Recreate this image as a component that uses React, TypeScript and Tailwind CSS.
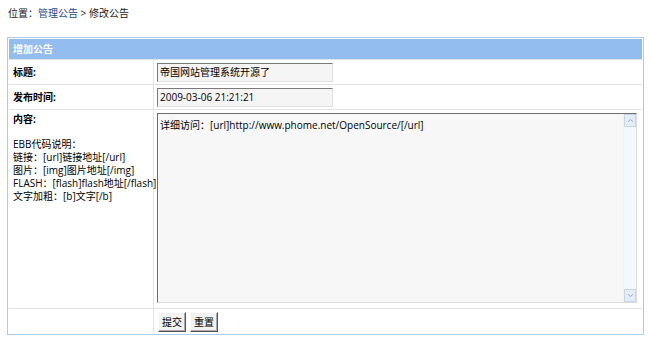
import { ChevronUp, ChevronDown } from "lucide-react";

const font = { fontFamily: '"Open Sans", "Noto Sans CJK SC", sans-serif' };

function Field({ value }: { value: string }) {
  return (
    <div className="w-[176px] h-[19px] bg-[#f5f5f5] border border-t-[#7a7a7a] border-l-[#7a7a7a] border-r-[#e0e0e0] border-b-[#e0e0e0] px-[2px] leading-[17px] text-black whitespace-nowrap">
      {value}
    </div>
  );
}

function Btn({ label }: { label: string }) {
  return (
    <button className="h-[20px] px-[3px] bg-[#f2f2f2] border border-t-[#fff] border-l-[#fff] border-r-[#555] border-b-[#555] shadow-[inset_-1px_-1px_0_#aaa] text-[10px] leading-[16px] text-black">
      {label}
    </button>
  );
}

export default function App() {
  return (
    <div className="w-[650px] h-[350px] bg-white text-[10px] text-[#222]" style={font}>
      <div className="pl-[8px] pt-[6px] h-[37px] leading-[14px]">
        位置：<a className="text-[#1a4a8a]">管理公告</a> &gt; 修改公告
      </div>

      <div className="ml-[7px] w-[637px] border border-[#aecbef] p-[1px] bg-white">
        <div className="h-[20px] bg-[#93bdee] pl-[4px] leading-[20px] text-white font-bold">增加公告</div>

        <div className="flex h-[25px] border-t border-[#e3e3e3]">
          <div className="w-[145px] border-r border-[#e3e3e3] pl-[4px] leading-[24px] font-bold text-black">标题:</div>
          <div className="flex-1 pl-[3px] pt-[3px]">
            <Field value="帝国网站管理系统开源了" />
          </div>
        </div>

        <div className="flex h-[25px] border-t border-[#e3e3e3]">
          <div className="w-[145px] border-r border-[#e3e3e3] pl-[4px] leading-[24px] font-bold text-black">发布时间:</div>
          <div className="flex-1 pl-[3px] pt-[3px]">
            <Field value="2009-03-06 21:21:21" />
          </div>
        </div>

        <div className="flex h-[199px] border-t border-[#e3e3e3]">
          <div className="w-[145px] border-r border-[#e3e3e3] pl-[4px] pt-[3px] leading-[13px] text-black whitespace-nowrap">
            <div className="font-bold">内容:</div>
            <div className="mt-[12px]">EBB代码说明：</div>
            <div>链接：[url]链接地址[/url]</div>
            <div>图片：[img]图片地址[/img]</div>
            <div>FLASH：[flash]flash地址[/flash]</div>
            <div>文字加粗：[b]文字[/b]</div>
          </div>
          <div className="flex-1 pl-[3px] pt-[3px]">
            <div className="flex w-[480px] h-[190px] bg-[#f7f7f7] border border-t-[#6e6e6e] border-l-[#6e6e6e] border-r-[#dcdcdc] border-b-[#dcdcdc]">
              <div className="flex-1 px-[2px] pt-[4px] leading-[14px] text-black whitespace-nowrap">
                详细访问：[url]http://www.phome.net/OpenSource/[/url]
              </div>
              <div className="w-[13px] flex flex-col bg-[#f4f8fd] border-l border-[#eef2f8]">
                <div className="h-[13px] flex items-center justify-center bg-[#e4ecf7] border border-[#c8d6ea]">
                  <ChevronUp size={9} strokeWidth={2} className="text-[#7e93b5]" />
                </div>
                <div className="flex-1" />
                <div className="h-[13px] flex items-center justify-center bg-[#e4ecf7] border border-[#c8d6ea]">
                  <ChevronDown size={9} strokeWidth={2} className="text-[#7e93b5]" />
                </div>
              </div>
            </div>
          </div>
        </div>

        <div className="flex h-[25px] border-t border-[#e3e3e3]">
          <div className="w-[145px] border-r border-[#e3e3e3]" />
          <div className="flex-1 flex gap-[4px] pl-[4px] pt-[3px]">
            <Btn label="提交" />
            <Btn label="重置" />
          </div>
        </div>
      </div>
    </div>
  );
}
